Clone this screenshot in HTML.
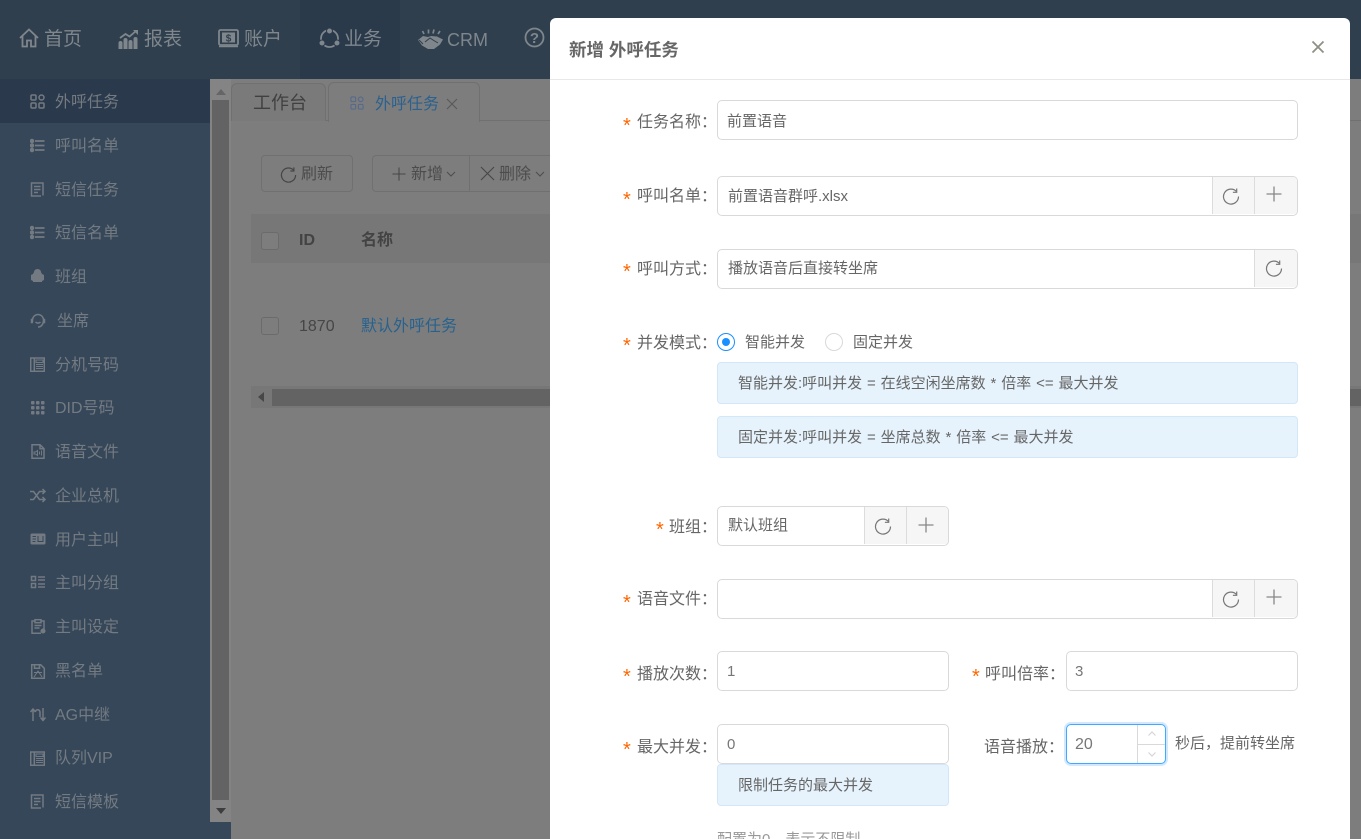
<!DOCTYPE html>
<html lang="zh"><head><meta charset="utf-8"><title>新增 外呼任务</title>
<style>
*{box-sizing:border-box}
html,body{margin:0;padding:0;width:1361px;height:839px;overflow:hidden;background:#7d7d7d;font-family:"Liberation Sans","Noto Sans CJK SC",sans-serif;color:#666}
#w{position:absolute;left:0;top:0;width:1361px;height:839px;overflow:hidden}
.a{position:absolute}
.t{position:absolute;white-space:nowrap}
.nav{font-size:19px;color:#7f868c;line-height:24px;top:28px}
.side{font-size:16px;color:#747a81;line-height:24px;left:55px}
svg{position:absolute;overflow:visible}
.ni{fill:none;stroke:#7f868c;stroke-width:1.800}
.si{fill:none;stroke:#747a81;stroke-width:1.500}
.cont{color:#4c4c4c;font-size:16px;line-height:24px}
.box{position:absolute;border:1px solid #d9d9d9;border-radius:5px;background:#fff;height:40px}
.val{position:absolute;white-space:nowrap;font-size:15px;line-height:22px;color:#666}
.lab{position:absolute;white-space:nowrap;font-size:16px;line-height:24px;color:#666;text-align:right}
.star{position:absolute;color:#f60;font-size:20px;line-height:16px;font-family:"Liberation Sans",sans-serif}
.add{position:absolute;top:0;height:37px;width:42px;background:#f6f6f6;border-left:1px solid #dcdcdc}
.alert{position:absolute;background:#e6f3fc;border:1px solid #d3e7f8;border-radius:4px;font-size:15px;line-height:42px;color:#666;padding-left:20px;white-space:nowrap;word-spacing:.7px}
</style></head>
<body>
<div id="w">
<svg width="0" height="0" style="position:absolute">
<defs>
<symbol id="grid" viewBox="0 0 15 15"><rect x="1" y="1" width="5" height="5" rx="1"/><rect x="9" y="1" width="5" height="5" rx="2.500"/><rect x="1" y="9" width="5" height="5" rx="1"/><rect x="9" y="9" width="5" height="5" rx="1"/></symbol>
<symbol id="list" viewBox="0 0 15 15"><path d="M5 3h9.500M5 7.500h9.500M5 12h9.500" stroke-width="1.800"/><circle cx="2" cy="3" r="1.500" fill="#747a81"/><circle cx="2" cy="7.500" r="1.500" fill="#747a81"/><circle cx="2" cy="12" r="1.500" fill="#747a81"/></symbol>
<symbol id="doc" viewBox="0 0 15 15"><path d="M13 13.500V1H1.500v13H11M4 4.500h6.500M4 7.500h6.500M4 10.500h4"/></symbol>
<symbol id="phone" viewBox="0 0 15 15"><rect x=".7" y="1" width="13.600" height="13.300" stroke-width="1.500"/><path d="M4.300 1v13.500" stroke-width="1.500"/><path d="M6 3h7v2.500H6zM6 7.500h7M6 9.500h7M6 11.500h7" stroke-width="1"/></symbol>
<symbol id="refresh" viewBox="0 0 18 18"><path d="M14.500 4.500A7.500 7.500 0 1 0 16.500 9.500" fill="none"/><path d="M14.700 1.500v3.800h-3.800" fill="none"/></symbol>
<symbol id="plus" viewBox="0 0 16 16"><path d="M8 .5v15M.5 8h15" fill="none"/></symbol>
</defs>
</svg>

<!-- top nav -->
<div class="a" style="left:0;top:0;width:1361px;height:79px;background:#2f3f4e"></div>
<div class="a" style="left:300px;top:0;width:100px;height:79px;background:#2a3a4b"></div>
<svg class="ni" style="left:19px;top:28px" width="20" height="20" viewBox="0 0 20 20"><path d="M1 10 10 1.500 19 10M3.500 8v10.500h4.500v-6h4v6h4.500V8"/></svg>
<div class="t nav" style="left:44px">首页</div>
<svg style="left:118px;top:28px" width="22" height="22" viewBox="0 0 22 22"><path fill="#7f868c" d="M.5 21v-6a2 2 0 0 1 4 0v6zM5.500 21v-9a2 2 0 0 1 4 0v9zM10.500 21v-7a2 2 0 0 1 4 0v7zM15.500 21V11a2 2 0 0 1 4 0v10z"/><path d="M2 10 7.500 6l4 2.500L18 3" fill="none" stroke="#7f868c" stroke-width="1.800"/><path fill="#7f868c" d="M15 2h5v5z"/></svg>
<div class="t nav" style="left:144px">报表</div>
<svg style="left:218px;top:29px" width="21" height="19" viewBox="0 0 21 19"><rect x="1" y="1" width="19" height="15" rx="1.500" fill="none" stroke="#7f868c" stroke-width="1.800"/><rect x="4" y="3.500" width="13" height="10" fill="#7f868c"/><path d="M1 17.500h19" stroke="#7f868c" stroke-width="1.500"/><text x="10.500" y="12.500" text-anchor="middle" font-size="10" font-weight="bold" font-family="Liberation Sans" fill="#2f3f4e">$</text></svg>
<div class="t nav" style="left:244px">账户</div>
<svg style="left:319px;top:28px" width="21" height="21" viewBox="0 0 21 21"><circle cx="10.500" cy="10.500" r="8.500" fill="none" stroke="#7f868c" stroke-width="1.800"/><circle cx="10.500" cy="3" r="3" fill="#7f868c" stroke="#2a3a4b"/><circle cx="3" cy="15" r="3" fill="#7f868c" stroke="#2a3a4b"/><circle cx="18" cy="15" r="3" fill="#7f868c" stroke="#2a3a4b"/></svg>
<div class="t nav" style="left:344px">业务</div>
<svg style="left:418px;top:29px" width="25" height="20" viewBox="0 0 25 20"><path d="M0 11l5-4 5 1 3-1 6 .500 6 3-3 5-6 4.500h-6l-6-3.500z" fill="#7f868c"/><path d="M7 13l5-4 3 2 5 3M1 11l4 4" fill="none" stroke="#2f3f4e" stroke-width="1"/><path d="M6 5 4.500 2M10.500 4.500V.5M15 4.500l1-4M20 5l2-3" stroke="#7f868c" stroke-width="1.700"/></svg>
<div class="t nav" style="left:447px;font-size:18px">CRM</div>
<svg style="left:524px;top:27px" width="21" height="21" viewBox="0 0 21 21"><circle cx="10.500" cy="10.500" r="9" fill="none" stroke="#7f868c" stroke-width="1.800"/><text x="10.500" y="16" text-anchor="middle" font-size="15" font-weight="bold" font-family="Liberation Sans" fill="#7f868c">?</text></svg>

<!-- sidebar -->
<div class="a" style="left:0;top:79px;width:231px;height:760px;background:#354759"></div>
<div class="a" style="left:0;top:79px;width:210px;height:44px;background:#2a394b"></div>
<svg class="si" style="left:30px;top:94px" width="15" height="15"><use href="#grid"/></svg>
<div class="t side" style="top:91px">外呼任务</div>
<svg class="si" style="left:30px;top:138px" width="15" height="15"><use href="#list"/></svg>
<div class="t side" style="top:135px">呼叫名单</div>
<svg class="si" style="left:30px;top:182px" width="15" height="15"><use href="#doc"/></svg>
<div class="t side" style="top:179px">短信任务</div>
<svg class="si" style="left:30px;top:225px" width="15" height="15"><use href="#list"/></svg>
<div class="t side" style="top:222px">短信名单</div>
<svg style="left:30px;top:269px" width="15" height="15" viewBox="0 0 15 15"><path fill="#747a81" d="M4 3a3.500 3 0 0 1 7 0l1 2 2 1v5l-2 1v1H3v-1l-2-1V6l2-1z"/></svg>
<div class="t side" style="top:266px">班组</div>
<svg class="si" style="left:30px;top:313px" width="16" height="16" viewBox="0 0 16 16"><path d="M2.500 9V7a5.500 5.500 0 0 1 11 0c0 4-2 7-5.500 7"/><path d="M3 6.500h-1.500v3H3M13 6.500h1.500v3H13M5.500 6h.1M10.500 6h.1M5.500 9c1.500 1.500 3.500 1.500 5 0" stroke-width="1.500"/></svg>
<div class="t side" style="left:57px;top:310px">坐席</div>
<svg class="si" style="left:30px;top:357px" width="15" height="15"><use href="#phone"/></svg>
<div class="t side" style="top:354px">分机号码</div>
<svg style="left:31px;top:401px" width="14" height="14" viewBox="0 0 14 14" fill="#747a81"><rect x="0" y="0" width="3.500" height="3.500" rx="1"/><rect x="5" y="0" width="3.500" height="3.500" rx="1"/><rect x="10" y="0" width="3.500" height="3.500" rx="1"/><rect x="0" y="5" width="3.500" height="3.500" rx="1"/><rect x="5" y="5" width="3.500" height="3.500" rx="1"/><rect x="10" y="5" width="3.500" height="3.500" rx="1"/><rect x="0" y="10" width="3.500" height="3.500" rx="1"/><rect x="5" y="10" width="3.500" height="3.500" rx="1"/><rect x="10" y="10" width="3.500" height="3.500" rx="1"/></svg>
<div class="t side" style="top:397px">DID号码</div>
<svg class="si" style="left:31px;top:444px" width="14" height="15" viewBox="0 0 14 15"><path d="M1 .700h8l4 4v9.600H1zM9 .700v4h4"/><path d="M3 8h1.500l2-1.500v5l-2-1.500H3zM8.500 7.500v3M10.500 6.500v5" stroke-width="1"/></svg>
<div class="t side" style="top:441px">语音文件</div>
<svg class="si" style="left:30px;top:489px" width="16" height="13" viewBox="0 0 16 13"><path d="M0 2.500h3.500l6 8H15M0 10.500h3.500l6-8H15M12.500 0 15 2.500 12.500 5M12.500 8 15 10.500 12.500 13" stroke-width="1.500"/></svg>
<div class="t side" style="top:485px">企业总机</div>
<svg style="left:30px;top:533px" width="16" height="12" viewBox="0 0 16 12"><rect x=".5" y=".5" width="15" height="11" rx="1.500" fill="#747a81"/><path d="M2.500 3.500H6M2.500 6H6M2.500 8.500h3M8 3v5.500h5V3" fill="none" stroke="#354759"/></svg>
<div class="t side" style="top:529px">用户主叫</div>
<svg class="si" style="left:31px;top:576px" width="14" height="13" viewBox="0 0 14 13"><rect x=".5" y=".5" width="4" height="4"/><rect x=".5" y="7.500" width="4" height="4"/><path d="M7 1h7M7 4h7M7 8h7M7 11h7"/></svg>
<div class="t side" style="top:572px">主叫分组</div>
<svg class="si" style="left:31px;top:619px" width="14" height="15" viewBox="0 0 14 15"><path d="M4 2H1v12.300h9M10 2h3v9" stroke-width="1.500"/><rect x="4" y=".7" width="6" height="3" /><path d="M3.500 6.500h7M3.500 9h5"/><circle cx="12" cy="12" r="1.800" fill="#747a81"/></svg>
<div class="t side" style="top:616px">主叫设定</div>
<svg class="si" style="left:31px;top:664px" width="14" height="15" viewBox="0 0 14 15"><path d="M.7.700h9l3.600 3.600v10H.7zM3.500.7v3.500h5V.7" stroke-width="1.500"/><path d="M3 13l4-6 4 6M3 8.500h8" stroke-width="1"/></svg>
<div class="t side" style="top:660px">黑名单</div>
<svg class="si" style="left:30px;top:707px" width="16" height="15" viewBox="0 0 16 15"><path d="M3 14V2.500M.5 5 3 2l2.500 3M5.500 5c0-3 4-3 4.500 0v5M13 1v12.500M10.500 10.500l2.500 3 2.500-3" stroke-width="1.500"/></svg>
<div class="t side" style="top:704px">AG中继</div>
<svg class="si" style="left:30px;top:751px" width="15" height="15"><use href="#phone"/></svg>
<div class="t side" style="top:747px">队列VIP</div>
<svg class="si" style="left:30px;top:794px" width="15" height="15"><use href="#doc"/></svg>
<div class="t side" style="top:791px">短信模板</div>

<!-- sidebar scrollbar -->
<div class="a" style="left:210px;top:79px;width:21px;height:743px;background:#848484"></div>
<div class="a" style="left:212px;top:100px;width:17px;height:700px;background:#636363"></div>
<div class="a" style="left:216px;top:89px;border:5px solid transparent;border-top:0;border-bottom:6px solid #656565;width:0;height:0"></div>
<div class="a" style="left:216px;top:808px;border:5px solid transparent;border-bottom:0;border-top:6px solid #3d3d3d;width:0;height:0"></div>

<!-- content -->
<div class="a" style="left:231px;top:79px;width:1130px;height:760px;background:#7d7d7d"></div>
<div class="a" style="left:231px;top:120px;width:1130px;height:1px;background:#707070"></div>
<div class="a" style="left:231px;top:83px;width:95px;height:38px;border:1px solid #707070;border-bottom:0;border-radius:6px 6px 0 0;background:#7a7a7a"></div>
<div class="t" style="left:253px;top:90px;font-size:18px;line-height:26px;color:#404040">工作台</div>
<div class="a" style="left:328px;top:82px;width:152px;height:40px;border:1px solid #707070;border-bottom:0;border-radius:6px 6px 0 0;background:#7d7d7d"></div>
<svg style="left:350px;top:96px;fill:none;stroke:#566a8c;stroke-width:1.200" width="14" height="14"><use href="#grid"/></svg>
<div class="t" style="left:375px;top:93px;font-size:16px;line-height:24px;color:#2a618f">外呼任务</div>
<svg style="left:447px;top:99px" width="10" height="10" viewBox="0 0 10 10"><path d="M0 0l10 10M10 0 0 10" stroke="#585858" stroke-width="1.100"/></svg>

<div class="a" style="left:261px;top:155px;width:92px;height:37px;border:1px solid #707070;border-radius:4px"></div>
<svg style="left:280px;top:166px;stroke:#464646;stroke-width:1.300" width="17" height="17"><use href="#refresh"/></svg>
<div class="t cont" style="left:301px;top:163px">刷新</div>
<div class="a" style="left:372px;top:155px;width:200px;height:37px;border:1px solid #707070;border-radius:4px"></div>
<div class="a" style="left:469px;top:155px;width:1px;height:37px;background:#707070"></div>
<svg style="left:392px;top:167px;stroke:#464646;stroke-width:1.200" width="14" height="14"><use href="#plus"/></svg>
<div class="t cont" style="left:411px;top:163px">新增</div>
<svg style="left:446px;top:171px" width="10" height="6" viewBox="0 0 10 6"><path d="M1 1l4 4 4-4" fill="none" stroke="#4c4c4c"/></svg>
<svg style="left:481px;top:167px" width="13" height="13" viewBox="0 0 13 13"><path d="M0 0l13 13M13 0 0 13" stroke="#464646" stroke-width="1.100"/></svg>
<div class="t cont" style="left:499px;top:163px">删除</div>
<svg style="left:535px;top:171px" width="10" height="6" viewBox="0 0 10 6"><path d="M1 1l4 4 4-4" fill="none" stroke="#4c4c4c"/></svg>

<div class="a" style="left:251px;top:214px;width:1110px;height:49px;background:#777"></div>
<div class="a" style="left:261px;top:232px;width:18px;height:18px;border:1px solid #6b6b6b;border-radius:3px;background:#7d7d7d"></div>
<div class="t" style="left:299px;top:229px;font-size:16px;line-height:24px;font-weight:bold;color:#434343">ID</div>
<div class="t" style="left:361px;top:229px;font-size:16px;line-height:24px;font-weight:bold;color:#434343">名称</div>
<div class="a" style="left:261px;top:317px;width:18px;height:18px;border:1px solid #6b6b6b;border-radius:3px"></div>
<div class="t" style="left:299px;top:315px;font-size:16px;line-height:24px;color:#464646">1870</div>
<div class="t" style="left:361px;top:315px;font-size:16px;line-height:24px;color:#27628f">默认外呼任务</div>
<div class="a" style="left:251px;top:386px;width:1110px;height:22px;background:#777"></div>
<div class="a" style="left:272px;top:389px;width:1089px;height:17px;background:#636363"></div>
<div class="a" style="left:258px;top:392px;border:5px solid transparent;border-left:0;border-right:6px solid #474747;width:0;height:0"></div>

<!-- modal -->
<div class="a" style="left:550px;top:18px;width:800px;height:821px;background:#fff;border-radius:6px 6px 0 0"></div>
<div class="a" style="left:550px;top:79px;width:800px;height:1px;background:#e8e8e8"></div>
<div class="t" style="left:569px;top:37px;font-size:17.500px;line-height:26px;font-weight:bold;color:#666">新增 外呼任务</div>
<svg style="left:1312px;top:41px" width="12" height="12" viewBox="0 0 12 12"><path d="M.5.500l11 11M11.500.500l-11 11" stroke="#8f8f86" stroke-width="1.800"/></svg>

<!-- row 1 -->
<div class="star" style="left:623px;top:118px">*</div>
<div class="lab" style="left:637px;top:111px">任务名称：</div>
<div class="box" style="left:717px;top:100px;width:581px"></div>
<div class="val" style="left:727px;top:111px">前置语音</div>

<!-- row 2 -->
<div class="star" style="left:623px;top:192px">*</div>
<div class="lab" style="left:637px;top:185px">呼叫名单：</div>
<div class="box" style="left:717px;top:176px;width:581px;overflow:hidden"><div class="add" style="left:494px"></div><div class="add" style="left:536px;width:44px"></div></div>
<div class="val" style="left:728px;top:186px">前置语音群呼.xlsx</div>
<svg style="left:1222px;top:187px;stroke:#777;stroke-width:1.200" width="18" height="18"><use href="#refresh"/></svg>
<svg style="left:1266px;top:186px;stroke:#888;stroke-width:1.300" width="16" height="16"><use href="#plus"/></svg>

<!-- row 3 -->
<div class="star" style="left:623px;top:264px">*</div>
<div class="lab" style="left:637px;top:258px">呼叫方式：</div>
<div class="box" style="left:717px;top:249px;width:581px;overflow:hidden"><div class="add" style="left:536px;width:44px"></div></div>
<div class="val" style="left:728px;top:258px">播放语音后直接转坐席</div>
<svg style="left:1265px;top:259px;stroke:#777;stroke-width:1.200" width="18" height="18"><use href="#refresh"/></svg>

<!-- row 4 -->
<div class="star" style="left:623px;top:338px">*</div>
<div class="lab" style="left:637px;top:332px">并发模式：</div>
<div class="a" style="left:717px;top:333px;width:18px;height:18px;border:1px solid #1890ff;border-radius:50%"></div>
<div class="a" style="left:722px;top:338px;width:8px;height:8px;background:#1890ff;border-radius:50%"></div>
<div class="val" style="left:745px;top:332px">智能并发</div>
<div class="a" style="left:825px;top:333px;width:18px;height:18px;border:1px solid #d9d9d9;border-radius:50%"></div>
<div class="val" style="left:853px;top:332px">固定并发</div>
<div class="alert" style="left:717px;top:362px;width:581px;height:42px">智能并发:呼叫并发 = 在线空闲坐席数 * 倍率 &lt;= 最大并发</div>
<div class="alert" style="left:717px;top:416px;width:581px;height:42px">固定并发:呼叫并发 = 坐席总数 * 倍率 &lt;= 最大并发</div>

<!-- 班组 -->
<div class="star" style="left:656px;top:522px">*</div>
<div class="lab" style="left:669px;top:516px">班组：</div>
<div class="box" style="left:717px;top:506px;width:232px;overflow:hidden"><div class="add" style="left:146px"></div><div class="add" style="left:188px;width:44px"></div></div>
<div class="val" style="left:728px;top:515px">默认班组</div>
<svg style="left:874px;top:517px;stroke:#777;stroke-width:1.200" width="18" height="18"><use href="#refresh"/></svg>
<svg style="left:918px;top:517px;stroke:#888;stroke-width:1.300" width="16" height="16"><use href="#plus"/></svg>

<!-- 语音文件 -->
<div class="star" style="left:623px;top:595px">*</div>
<div class="lab" style="left:637px;top:588px">语音文件：</div>
<div class="box" style="left:717px;top:579px;width:581px;overflow:hidden"><div class="add" style="left:494px"></div><div class="add" style="left:536px;width:44px"></div></div>
<svg style="left:1222px;top:590px;stroke:#777;stroke-width:1.200" width="18" height="18"><use href="#refresh"/></svg>
<svg style="left:1266px;top:589px;stroke:#888;stroke-width:1.300" width="16" height="16"><use href="#plus"/></svg>

<!-- 播放次数 -->
<div class="star" style="left:623px;top:669px">*</div>
<div class="lab" style="left:637px;top:663px">播放次数：</div>
<div class="box" style="left:717px;top:651px;width:232px"></div>
<div class="val" style="left:727px;top:661px;color:#777">1</div>
<div class="star" style="left:972px;top:669px">*</div>
<div class="lab" style="left:985px;top:663px">呼叫倍率：</div>
<div class="box" style="left:1066px;top:651px;width:232px"></div>
<div class="val" style="left:1075px;top:661px;color:#777">3</div>

<!-- 最大并发 -->
<div class="star" style="left:623px;top:742px">*</div>
<div class="lab" style="left:637px;top:736px">最大并发：</div>
<div class="box" style="left:717px;top:724px;width:232px"></div>
<div class="val" style="left:727px;top:734px;color:#777">0</div>
<div class="alert" style="left:717px;top:764px;width:232px;height:42px">限制任务的最大并发</div>
<div class="lab" style="left:984px;top:736px">语音播放：</div>
<div class="box" style="left:1066px;top:724px;width:100px;border-color:#40a9ff;box-shadow:0 0 0 2px rgba(24,144,255,.2)"></div>
<div class="a" style="left:1137px;top:725px;width:1px;height:38px;background:#d9d9d9"></div>
<div class="a" style="left:1137px;top:744px;width:28px;height:1px;background:#d9d9d9"></div>
<svg style="left:1148px;top:731px" width="8" height="5" viewBox="0 0 8 5"><path d="M.5 4.500 4 1l3.500 3.500" fill="none" stroke="#d5d5d5" stroke-width="1.200"/></svg>
<svg style="left:1148px;top:752px" width="8" height="5" viewBox="0 0 8 5"><path d="M.5.500 4 4 7.500.5" fill="none" stroke="#d5d5d5" stroke-width="1.200"/></svg>
<div class="val" style="left:1075px;top:734px;font-size:16px;color:#777">20</div>
<div class="val" style="left:1175px;top:733px;font-size:15px">秒后，提前转坐席</div>
<div class="val" style="left:717px;top:829px;color:#999">配置为0，表示不限制</div>
</div>
</body></html>
